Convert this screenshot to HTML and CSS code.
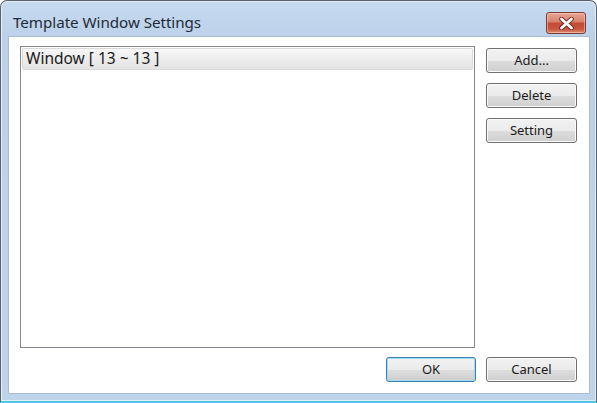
FILE: index.html
```html
<!DOCTYPE html>
<html>
<head>
<meta charset="utf-8">
<link rel="stylesheet" href="styles.css">
</head>
<body>
<div class="window">
  <div class="titlebar">
    <span class="title">Template Window Settings</span>
    <button class="close" aria-label="Close">
      <svg width="15" height="13" viewBox="0 0 15 13">
        <path d="M2.5 2 L12.5 11 M12.5 2 L2.5 11" stroke="#6b2a22" stroke-width="4.6" stroke-linecap="round"/>
        <path d="M2.5 2 L12.5 11 M12.5 2 L2.5 11" stroke="#ffffff" stroke-width="2.8" stroke-linecap="round"/>
      </svg>
    </button>
  </div>
  <div class="client">
    <div class="listbox">
      <div class="item">Window [ 13 ~ 13 ]</div>
    </div>
    <div class="side">
      <button class="btn">Add...</button>
      <button class="btn">Delete</button>
      <button class="btn">Setting</button>
    </div>
    <div class="bottom">
      <button class="btn default">OK</button>
      <button class="btn">Cancel</button>
    </div>
  </div>
</div>
</body>
</html>
```

FILE: styles.css
```css
html, body {
  margin: 0;
  padding: 0;
  background: #ffffff;
}
body {
  width: 597px;
  height: 403px;
  overflow: hidden;
  font-family: "Noto Sans", "Open Sans", sans-serif;
}
.window {
  box-sizing: border-box;
  width: 597px;
  height: 403px;
  border: 1px solid #59636f;
  border-bottom: 2px solid #52c6e3;
  border-radius: 7px 7px 0 0;
  background: linear-gradient(to bottom, #c6daef 0px, #bcd2ea 36px, #bed4eb 100%);
  display: flex;
  flex-direction: column;
  box-shadow: inset 0 0 0 1px #e4eef8;
}
.titlebar {
  height: 35px;
  display: flex;
  align-items: flex-start;
  justify-content: space-between;
  padding: 0 10px 0 12px;
}
.title {
  font-size: 15.2px;
  line-height: 20px;
  color: #1e2a36;
  margin-top: 11px;
  letter-spacing: -0.05px;
}
.close {
  width: 40px;
  height: 22px;
  margin-top: 11px;
  border: 1px solid #7b3a30;
  border-radius: 3px;
  padding: 0;
  display: flex;
  align-items: center;
  justify-content: center;
  background: linear-gradient(to bottom, #e8a593 0%, #d9826e 45%, #c24b36 50%, #c8563f 80%, #dc8c70 100%);
  box-shadow: inset 0 0 0 1px rgba(255,220,210,0.5);
}
.client {
  flex: 1;
  margin: 0 6px 7px 7px;
  background: #ffffff;
  border: 1px solid #a9bed6;
  display: grid;
  grid-template-columns: 455px 91px;
  grid-template-rows: 302px 25px;
  column-gap: 11px;
  row-gap: 9px;
  padding: 9px 11px 11px 11px;
}
.listbox {
  border: 1px solid #828790;
  padding: 1px;
}
.item {
  height: 22px;
  box-sizing: border-box;
  border: 1px solid #dadada;
  border-radius: 2px;
  background: linear-gradient(to bottom, #f8f8f8 0%, #ececec 50%, #e4e4e4 100%);
  font-size: 15.5px;
  line-height: 19px;
  padding-left: 3px;
  color: #1b1b1b;
}
.side {
  display: flex;
  flex-direction: column;
  gap: 10px;
  padding-top: 2px;
}
.btn {
  box-sizing: border-box;
  width: 91px;
  height: 25px;
  border: 1px solid #707070;
  border-radius: 3px;
  background: linear-gradient(to bottom, #f2f2f2 0%, #ebebeb 50%, #dddddd 51%, #cfcfcf 100%);
  box-shadow: inset 0 0 0 1px #fbfbfb;
  font-family: "Noto Sans", "Open Sans", sans-serif;
  font-size: 13px;
  color: #1a1a1a;
  padding: 0;
  line-height: 21px;
}
.bottom {
  grid-column: 1 / 3;
  display: flex;
  justify-content: flex-end;
  gap: 10px;
}
.btn.default {
  width: 90px;
  border-color: #3c7fb1;
  box-shadow: inset 0 0 0 1px #9fdcf6;
}
```
